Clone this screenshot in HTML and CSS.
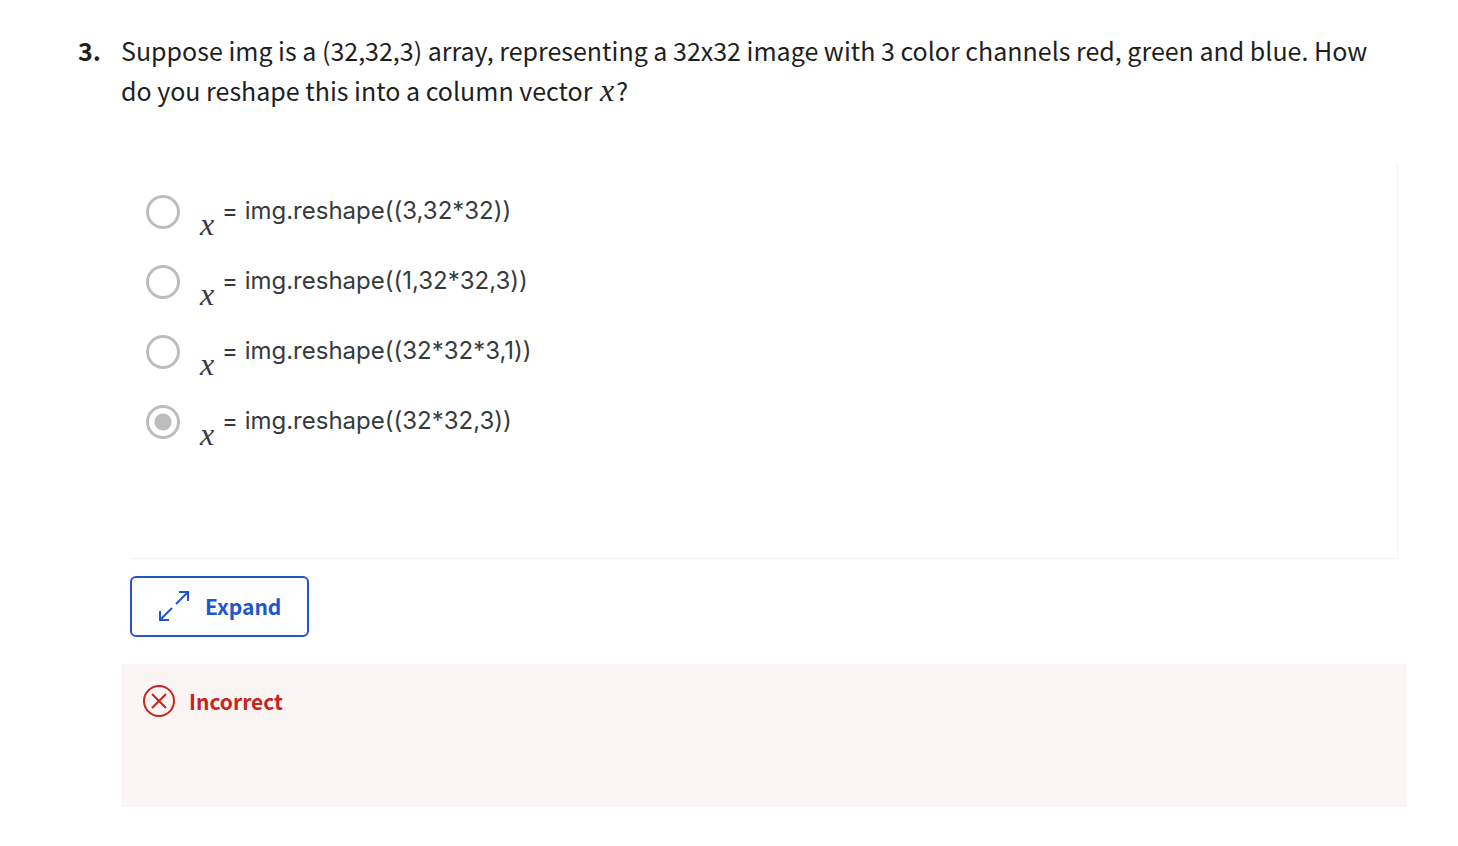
FILE: index.html
```html
<!DOCTYPE html>
<html lang="en">
<head>
<meta charset="utf-8">
<meta name="viewport" content="width=device-width, initial-scale=1">
<title>Quiz question 3</title>
<link rel="stylesheet" href="styles.css">
</head>
<body>
<main class="question">
  <div class="number">3.</div>
  <div class="content">
    <h1 class="prompt" id="prompt">Suppose img is a (32,32,3) array, representing a 32x32 image with 3 color channels red, green and blue. How do you reshape this into a column vector <i class="math inline-math">x</i>?</h1>
    <div class="panel">
      <div class="options" role="radiogroup" aria-labelledby="prompt">
        <label class="option"><input class="radio" type="radio" name="answer"><i class="math variable">x</i><span class="code">= img.reshape((3,32*32))</span></label>
        <label class="option"><input class="radio" type="radio" name="answer"><i class="math variable">x</i><span class="code">= img.reshape((1,32*32,3))</span></label>
        <label class="option"><input class="radio" type="radio" name="answer"><i class="math variable">x</i><span class="code">= img.reshape((32*32*3,1))</span></label>
        <label class="option"><input class="radio" type="radio" name="answer" checked><i class="math variable">x</i><span class="code">= img.reshape((32*32,3))</span></label>
      </div>
    </div>
    <button class="expand" type="button">
      <svg class="expand-icon" viewBox="0 0 32 32" aria-hidden="true"><path d="M18 14L30 2M21 2H30V11M14 18L2 30M2 21V30H11"/></svg>
      <span>Expand</span>
    </button>
    <section class="feedback">
      <svg class="feedback-icon" viewBox="0 0 34 34" aria-hidden="true"><circle cx="17" cy="17" r="15"/><path d="M10 10L24 24M24 10L10 24"/></svg>
      <strong>Incorrect</strong>
    </section>
  </div>
</main>
</body>
</html>
```
FILE: styles.css
```css
* { box-sizing: border-box; }
body { margin: 0; background: #fff; color: #1f1f1f; font-family: "Noto Sans CJK SC", "Noto Sans", sans-serif; }
.question { display: flex; padding: 30px 51px 39px 78px; }
.number { flex: 0 0 43px; font-size: 25px; font-weight: 700; line-height: 40px; }
.content { flex: 1; min-width: 0; }
.prompt { margin: 0; padding-right: 24px; font-size: 25px; font-weight: 400; line-height: 40px; }
.math { font-family: "Liberation Serif", serif; font-size: 32px; line-height: 32px; }
.inline-math { margin: 0 2px; }
.panel { margin: 53px 9px 0; padding: 14px 16px 101px; border-right: 1px solid #f2f2f2; border-bottom: 1px solid #f2f2f2; }
.option { display: flex; height: 70px; align-items: center; color: #373a3c; }
.radio { appearance: none; flex: none; width: 34px; height: 34px; margin: 0 20px 0 0; border: 3px solid #bdbdbd; border-radius: 50%; background: #fff; }
.radio:checked { background: radial-gradient(circle, #bdbdbd 8px, #fff 9px); }
.variable { width: 22px; padding-top: 24px; }
.code { font-family: Inter, sans-serif; font-size: 24px; line-height: 36px; padding-bottom: 2px; font-variant-ligatures: no-contextual; }
.expand { display: flex; align-items: center; gap: 15px; margin: 17px 9px 0; padding: 11px 26px 13px; height: 61px; border: 2px solid #2155d0; border-radius: 6px; background: #fff; color: #2155d0; font: 700 21px "Noto Sans CJK SC", "Noto Sans", sans-serif; }
.expand-icon { width: 32px; height: 32px; fill: none; stroke: currentColor; stroke-width: 2; }
.feedback { display: flex; gap: 13px; margin-top: 27px; min-height: 143px; padding: 20px 21px; background: #fbf5f5; color: #c7251b; font-size: 21px; line-height: 34px; }
.feedback-icon { width: 34px; height: 34px; fill: none; stroke: currentColor; stroke-width: 2; }
```
